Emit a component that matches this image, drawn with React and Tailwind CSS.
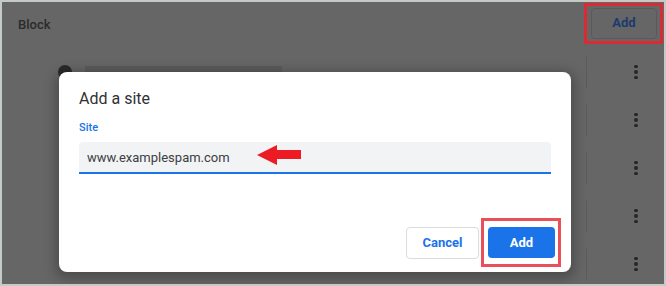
const rows = [0, 1, 2, 3, 4];

function Kebab() {
  return (
    <div className="flex w-10 flex-col items-center gap-[2px]">
      <span className="h-[3.5px] w-[3.5px] rounded-full bg-[#262626]" />
      <span className="h-[3.5px] w-[3.5px] rounded-full bg-[#262626]" />
      <span className="h-[3.5px] w-[3.5px] rounded-full bg-[#262626]" />
    </div>
  );
}

export default function App() {
  return (
    <div className="relative h-[286px] w-[666px] overflow-hidden border-2 border-[#c4cbc7] bg-[#666666] font-['Roboto',sans-serif]">
      {/* header */}
      <div className="flex h-[46px] items-center justify-between pl-4 pr-[1px]">
        <span className="text-[13px] font-medium text-[#2b2b2b]">Block</span>
        <div className="mt-[-4px] border-[3px] border-[#d92b33] py-[2px] pl-1 pr-[3px]">
          <button className="h-[31px] w-[66px] rounded-[4px] border border-[#5a5a5a] text-[13px] font-bold text-[#1d3a70]">
            Add
          </button>
        </div>
      </div>

      {/* site list */}
      <div className="flex flex-col">
        {rows.map((r) => (
          <div key={r} className="flex h-[48px] items-center">
            <div className="relative flex flex-1 items-center pl-[56px]">
              {r === 0 && (
                <>
                  <span className="h-[14px] w-[14px] rounded-full bg-[#2a2a2a]" />
                  <div className="ml-[6px] flex w-[205px] flex-col">
                    <span className="ml-[7px] h-[8px] w-[197px] bg-[#5c5c5c]" />
                    <span className="h-[4px] w-[205px] bg-[#a3a3a3]" />
                  </div>
                </>
              )}
            </div>
            <span className="h-[31px] w-px bg-[#5b5b5b]" />
            <div className="flex w-[77px] justify-center pl-[21px]">
              <Kebab />
            </div>
          </div>
        ))}
      </div>

      {/* dialog overlay */}
      <div className="absolute left-[57px] top-[70px] flex h-[200px] w-[512px] flex-col rounded-lg bg-white px-5 shadow-[0_3px_12px_4px_rgba(0,0,0,0.25)]">
        <h2 className="pt-[15px] text-[16px] leading-6 text-[#303134]">Add a site</h2>
        <label className="mt-[10px] text-[11px] font-medium leading-[14px] text-[#1a73e8]">Site</label>
        <div className="relative mt-[7px] flex h-[32px] items-center rounded-t-[4px] border-b-2 border-[#1a73e8] bg-[#f1f3f4] px-2">
          <span className="pt-[1px] text-[13px] text-[#3c4043]">www.examplespam.com</span>
          <svg className="absolute left-[178px] top-[3px]" width="44" height="20" viewBox="0 0 44 20">
            <polygon points="0,10 20,0 20,5 44,5 44,14 20,14 20,20" fill="#ed1c24" />
          </svg>
        </div>
        <div className="flex-1" />
        <div className="mr-[-10px] flex items-center justify-end pb-[5px]">
          <button className="h-[32px] w-[73px] rounded-[4px] border border-[#dadce0] text-[13px] font-bold text-[#1a73e8]">
            Cancel
          </button>
          <div className="ml-[2px] border-[3px] border-[#ea505a] py-[6px] pl-1 pr-[3px]">
            <button className="h-[31px] w-[67px] rounded-[4px] bg-[#1a73e8] text-[13px] font-bold text-white">
              Add
            </button>
          </div>
        </div>
      </div>
    </div>
  );
}
